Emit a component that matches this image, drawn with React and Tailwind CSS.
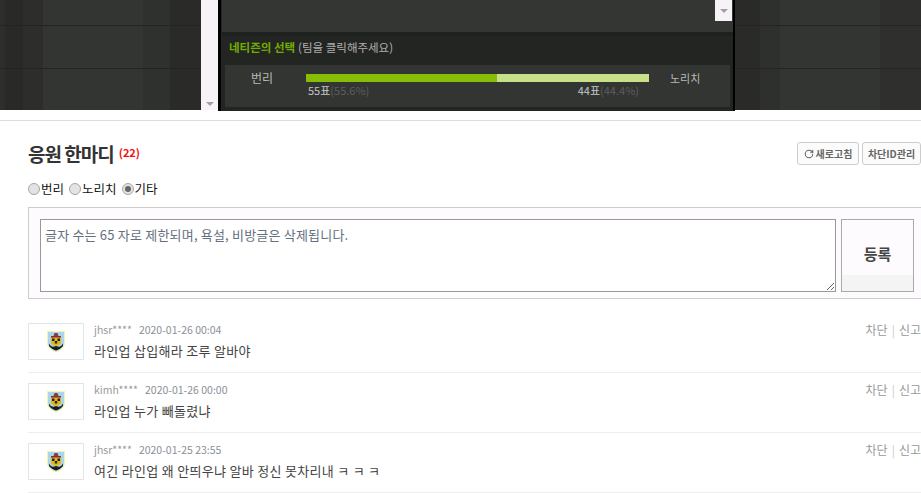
import { useState } from "react";
import { RotateCw } from "lucide-react";

const FONT = "font-['Noto_Sans_CJK_KR','Noto_Sans',sans-serif]";

const comments = [
  { id: 1, name: "jhsr****", date: "2020-01-26 00:04", text: "라인업 삽입해라 조루 알바야" },
  { id: 2, name: "kimh****", date: "2020-01-26 00:00", text: "라인업 누가 빼돌렸냐" },
  { id: 3, name: "jhsr****", date: "2020-01-25 23:55", text: "여긴 라인업 왜 안띄우냐 알바 정신 못차리내 ㅋ ㅋ ㅋ" },
];

const Crest = () => (
  <svg width="20" height="23" viewBox="0 0 20 23">
    <path d="M1 1h18v12c0 5-5 8-9 9.500C6 21 1 18 1 13z" fill="#f6f4a8" />
    <path d="M2 2h16v11c0 4-4 7-8 8.500C6 20 2 17 2 13z" fill="#a9d6ee" />
    <path d="M8.500 3h3l1 3h-5z" fill="#8a3a48" />
    <path d="M5 6h10v8l-5 2.500L5 14z" fill="#e0b81e" />
    <path d="M5 6h10v1.500H5z" fill="#8a2c30" />
    <path d="M6 8.500h2.500V11H6zM11.500 8.500H14V11h-2.500zM8.800 11h2.400v2.500H8.800z" fill="#2a2018" />
    <path d="M3 13.500c2 3.500 4 4 7 2.500 3 1.500 5 1 7-2.500v2.500c-2 2.500-4 3.500-7 4.500-3-1-5-2-7-4.500z" fill="#1c1d1f" />
  </svg>
);

const Radio = ({ label, checked, onSelect }) => (
  <label className="flex items-center cursor-pointer">
    <span className="flex items-center justify-center w-[12px] h-[12px] mr-[1px] rounded-full border border-[#a6a6a6] bg-[#e3e3e3]">
      {checked && <span className="w-[6px] h-[6px] rounded-full bg-[#666666]" />}
    </span>
    <input type="radio" name="team" className="hidden" checked={checked} onChange={onSelect} />
    <span>{label}</span>
  </label>
);

const SideBg = ({ className }) => (
  <div className={`flex flex-col ${className}`}>
    <div className="h-[26px] border-b border-[#242523]" />
    <div className="h-[43px] border-b border-[#242523]" />
  </div>
);

const App = () => {
  const [team, setTeam] = useState("etc");

  return (
    <div className={`w-[921px] h-[493px] overflow-hidden bg-white ${FONT}`}>
      <div className="flex h-[110px]">
        <SideBg className="w-[201px] bg-[linear-gradient(90deg,#2e2f2d_0,#2e2f2d_5px,#292a28_5px,#292a28_23px,#2d2e2c_23px,#2d2e2c_43px,#333532_43px,#333532_143px,#2f312f_143px,#2f312f_170px,#2a2b29_170px,#2a2b29_201px)]" />
        <div className="w-[17px] bg-[#f7f2f7] flex items-end justify-center pb-[2px]">
          <span className="w-0 h-0 mb-[2px] border-x-[4px] border-x-transparent border-t-[4px] border-t-[#a0a0a0]" />
        </div>
        <div className="w-[517px] h-[111px] flex flex-col bg-[#262825] border-l-[3px] border-r-[2px] border-black pl-[1px]">
          <div className="h-[32px] flex justify-end bg-[#343633]">
            <div className="w-[17px] h-[21px] mr-[1px] bg-[#f7f2f7] flex items-center justify-center">
              <span className="w-0 h-0 border-x-[4px] border-x-transparent border-t-[4px] border-t-[#a0a0a0]" />
            </div>
          </div>
          <div className="h-[4px] bg-[#1f211e]" />
          <div className="flex flex-col flex-1 bg-[#232522]">
            <div className="h-[29px] pt-[3px] pl-[7px] flex items-start text-[11.500px] leading-[16px] text-[#b0b0ae]">
              <b className="text-[#73ac00] mr-[3px]">네티즌의 선택</b>
              <span>(팀을 클릭해주세요)</span>
            </div>
            <div className="h-[42px] ml-[3px] mr-[3px] flex bg-[#333532]">
              <div className="w-[81px] pt-[5px] pl-[26px] text-[12px] leading-[16px] text-[#b8b8b6]">번리</div>
              <div className="w-[343px] pt-[9px]">
                <div className="flex h-[8px]">
                  <div className="w-[191px] bg-[#87bd06]" />
                  <div className="flex-1 bg-[#c8e08a]" />
                </div>
                <div className="flex justify-between pl-[2px] pr-[10px] text-[11px] leading-[16px] text-[#c4c8c8]">
                  <span>55표<span className="text-[#5c5e5c]">(55.6%)</span></span>
                  <span>44표<span className="text-[#5c5e5c]">(44.4%)</span></span>
                </div>
              </div>
              <div className="pl-[21px] pt-[5px] text-[11px] leading-[16px] text-[#b8b8b6]">노리치</div>
            </div>
          </div>
        </div>
        <SideBg className="flex-1 bg-[linear-gradient(90deg,#2a2b29_0,#2a2b29_25px,#2e302d_25px,#2e302d_45px,#333532_45px,#333532_145px,#2f2f2e_145px,#2f2f2e_186px)]" />
      </div>

      <div className="mt-[10px] border-t border-[#dddddd] px-[28px] w-[921px]">
        <div className="flex items-start justify-between h-[59px] pt-[21px] -mr-[28px]">
          <div className="flex items-center">
            <h2 className="text-[19px] leading-[24px] font-bold tracking-[-1px] text-[#333333]">응원 한마디</h2>
            <span className="ml-[5px] text-[11px] font-bold text-[#f01010] -mt-[3px]">(22)</span>
          </div>
          <div className="flex gap-[3px] text-[10px] font-bold text-[#666666]">
            <button className="flex items-center justify-center gap-[2px] w-[62px] h-[23px] border border-[#cccccc] rounded-[3px] bg-[#fbfbfb]">
              <RotateCw size={10} strokeWidth={2.5} />
              새로고침
            </button>
            <button className="w-[59px] h-[23px] border border-[#cccccc] rounded-[3px] bg-[#fbfbfb] whitespace-nowrap">차단ID관리</button>
          </div>
        </div>

        <div className="flex items-center gap-[5px] h-[18px] text-[12.500px] text-[#111111]">
          <Radio label="번리" checked={team === "bur"} onSelect={() => setTeam("bur")} />
          <Radio label="노리치" checked={team === "nor"} onSelect={() => setTeam("nor")} />
          <Radio label="기타" checked={team === "etc"} onSelect={() => setTeam("etc")} />
        </div>

        <div className="flex mt-[9px] w-[900px] h-[92px] border border-[#cccccc] bg-[#fdfbfd] pt-[11px] pl-[11px]">
          <textarea
            className="w-[796px] h-[73px] px-[4px] py-[7px] border border-[#999999] bg-white text-[13px] tracking-[0.2px] leading-[16px] text-[#666666] placeholder:text-[#667080] outline-none"
            placeholder="글자 수는 65 자로 제한되며, 욕설, 비방글은 삭제됩니다."
          />
          <button className="ml-[5px] w-[73px] h-[73px] pb-[2px] border border-[#aaaaaa] bg-[linear-gradient(180deg,#fdfbfd_78%,#f5f4f5_78%)] text-[15px] font-bold text-[#444444]">
            등록
          </button>
        </div>

        <ul className="mt-[14px] w-[900px]">
          {comments.map((c) => (
            <li key={c.id} className="flex h-[60px] pt-[10px] border-b border-[#eeeeee]">
              <div className="flex items-center justify-center w-[56px] h-[37px] border border-[#e5e5e5]">
                <Crest />
              </div>
              <div className="flex-1 ml-[10px]">
                <div className="text-[10.500px] leading-[14px] text-[#9a9a9a]">
                  <span className="mr-[7px]">{c.name}</span>
                  <span className="text-[#8a8f98]">{c.date}</span>
                </div>
                <p className="mt-[7px] text-[13px] tracking-[0.3px] leading-[14px] text-[#444444]">{c.text}</p>
              </div>
              <div className="mr-[7px] text-[12px] leading-[14px] text-[#999999] whitespace-nowrap">
                차단<span className="mx-[4px] text-[#cccccc]">|</span>신고
              </div>
            </li>
          ))}
        </ul>
      </div>
    </div>
  );
};

export default App;
